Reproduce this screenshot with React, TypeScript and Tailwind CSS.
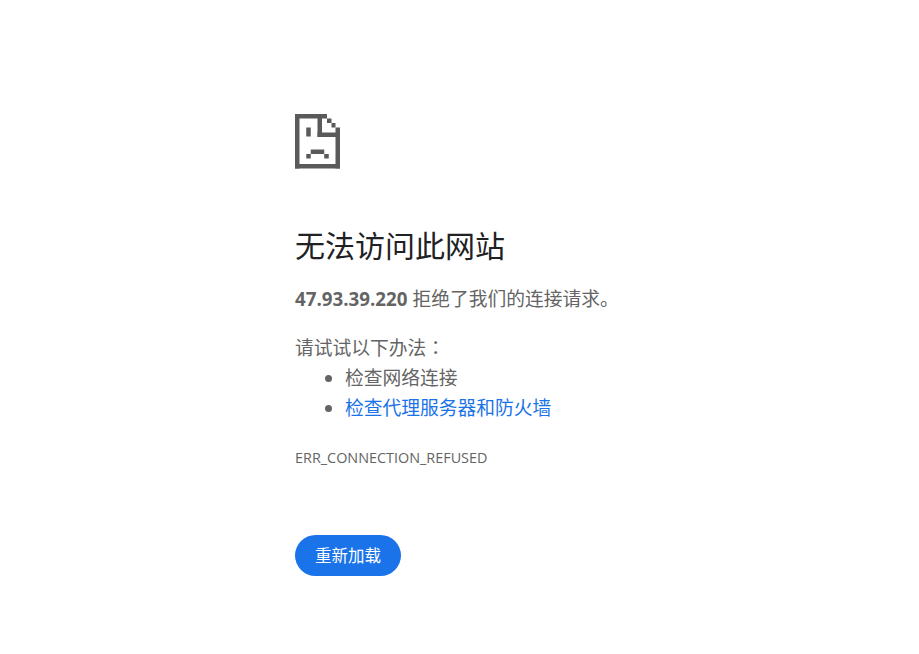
export default function App() {
  return (
    <div className="min-h-screen bg-white pl-[295px] pt-[114px] text-[18.75px] leading-[30px] text-[#646464] font-['Open_Sans','Noto_Sans_CJK_SC',sans-serif]">
      <svg width="45" height="55" viewBox="0 0 45 55" className="block" fill="#5a5a5a">
        <rect x="0" y="0" width="4.5" height="54.5" />
        <rect x="0" y="0" width="32" height="4.5" />
        <rect x="0" y="50" width="45" height="4.5" />
        <rect x="40.5" y="13.5" width="4.5" height="41" />
        <rect x="22.5" y="0" width="4.5" height="23" />
        <rect x="22.5" y="18.5" width="22.5" height="4.5" />
        <rect x="32" y="4.5" width="4.5" height="4.5" />
        <rect x="36.5" y="9" width="4" height="4.5" />
        <rect x="11.25" y="13.5" width="4.5" height="9" />
        <rect x="11.25" y="40" width="4.5" height="4.5" />
        <rect x="15.75" y="35.5" width="13.5" height="4.5" />
        <rect x="29.25" y="40" width="4.5" height="4.5" />
      </svg>
      <h1 className="mt-[58px] text-[30px] leading-[37px] font-normal text-[#202124]">无法访问此网站</h1>
      <p className="mt-[20px]"><b className="font-bold">47.93.39.220</b> 拒绝了我们的连接请求。</p>
      <p className="mt-[18px]">请试试以下办法<span className="font-['Noto_Sans_CJK_TC',sans-serif]">：</span></p>
      <ul className="list-disc pl-[50px]">
        <li>检查网络连接</li>
        <li><a className="text-[#1a73e8]">检查代理服务器和防火墙</a></li>
      </ul>
      <div className="mt-[25px] text-[14.4px] leading-[20px]">ERR_CONNECTION_REFUSED</div>
      <button className="mt-[67px] h-[41px] w-[106px] rounded-[21px] bg-[#1a73e8] text-[16.5px] text-white">重新加载</button>
    </div>
  );
}
